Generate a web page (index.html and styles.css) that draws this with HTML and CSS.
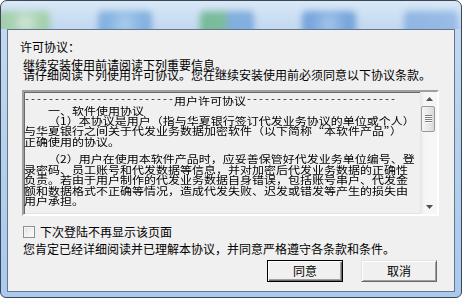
FILE: index.html
```html
<!DOCTYPE html>
<html lang="zh-CN">
<head>
<meta charset="utf-8">
<link rel="stylesheet" href="styles.css">
</head>
<body>
<div class="window">
  <div class="titlebar">
    <span class="blob b1"></span>
    <span class="blob b2"></span>
    <span class="blob b3"></span>
    <span class="blob b4"></span>
    <span class="blob b5"></span>
  </div>
  <div class="client">
    <div class="title">许可协议：</div>
    <div class="intro">继续安装使用前请阅读下列重要信息。<br>请仔细阅读下列使用许可协议。您在继续安装使用前必须同意以下协议条款。</div>
    <div class="license">
      <div class="license-view">
        <div class="license-text">
          <p class="para"><span class="dash">-------------------------</span>用户许可协议<span class="dash">-------------------------</span><br><span class="ind"></span>一、软件使用协议<br><span class="ind"></span>（1）本协议是用户（指与华夏银行签订代发业务协议的单位或个人）<br>与华夏银行之间关于代发业务数据加密软件（以下简称“本软件产品”）<br>正确使用的协议。</p>
          <p class="para second"><span class="ind"></span>（2）用户在使用本软件产品时，应妥善保管好代发业务单位编号、登<br>录密码、员工账号和代发数据等信息，并对加密后代发业务数据的正确性<br>负责。若由于用户制作的代发业务数据自身错误，包括账号串户、代发金<br>额和数据格式不正确等情况，造成代发失败、迟发或错发等产生的损失由<br>用户承担。</p>
        </div>
      </div>
      <div class="scrollbar">
        <div class="sb-btn up"><svg width="7" height="4" viewBox="0 0 7 4"><polygon points="3.5,0 7,4 0,4" fill="#505050"/></svg></div>
        <div class="sb-track">
          <div class="thumb"><span></span><span></span><span></span><span></span></div>
        </div>
        <div class="sb-btn down"><svg width="7" height="4" viewBox="0 0 7 4"><polygon points="0,0 7,0 3.5,4" fill="#505050"/></svg></div>
      </div>
    </div>
    <label class="check-row"><span class="checkbox"></span><span>下次登陆不再显示该页面</span></label>
    <div class="statement">您肯定已经详细阅读并已理解本协议，并同意严格遵守各条款和条件。</div>
    <div class="buttons">
      <button class="btn default">同意</button>
      <button class="btn">取消</button>
    </div>
  </div>
</div>
</body>
</html>
```
FILE: styles.css
```css
html, body {
  margin: 0;
  padding: 0;
  background: #ffffff;
}
body {
  width: 463px;
  height: 299px;
  overflow: hidden;
  font-family: "Noto Sans CJK SC", "Noto Sans", sans-serif;
  font-size: 12px;
  color: #000;
}
.window {
  box-sizing: border-box;
  width: 462px;
  height: 298px;
  border: 1px solid #3d4754;
  border-radius: 7px 7px 6px 6px;
  background: linear-gradient(180deg, #d8e8f7 0, #c2d8f0 28px, #b2cfee 60%, #a9caee 100%);
  padding: 0 6px 5px 6px;
  display: flex;
  flex-direction: column;
  overflow: hidden;
}
.titlebar {
  height: 28px;
  margin: 0 -6px;
  display: flex;
  gap: 48px;
  padding-top: 10px;
  box-sizing: border-box;
  overflow: hidden;
}
.blob {
  flex: none;
  width: 54px;
  height: 30px;
  border-radius: 5px;
  filter: blur(3px);
  opacity: 0.75;
}
.b1 { margin-left: -5px; background: radial-gradient(circle at 55% 40%, #d9ecd8 0, #9fcf9c 40%, #8dc48d 100%); }
.b2 { background: radial-gradient(circle at 50% 45%, #a5c9ea 0, #6fa6dc 55%, #6a9fd8 100%); }
.b3 { background: linear-gradient(90deg, #5fb07e 0, #64b184 45%, #6aa1da 55%, #6b9fd9 100%); }
.b4 { background: radial-gradient(circle at 50% 45%, #9cc0e8 0, #5f95d6 55%, #5b90d3 100%); }
.b5 { background: linear-gradient(90deg, #7ea8df, #8bb1e3); }

.client {
  box-sizing: border-box;
  height: 263px;
  border: 1px solid #66768a;
  background: #f0f0f0;
  display: flex;
  flex-direction: column;
}
.title {
  margin: 11px 0 0 12px;
  line-height: 12px;
}
.intro {
  margin: 7px 0 0 15px;
  line-height: 10.4px;
  white-space: nowrap;
}
.license {
  margin: 9px 15px 0 14px;
  height: 126px;
  box-sizing: border-box;
  border: 2px solid;
  border-color: #a0a0a0 #ffffff #ffffff #a0a0a0;
  box-shadow: inset 1px 1px 0 #696969, inset -1px -1px 0 #e3e3e3;
  background: #f0f0f0;
  display: flex;
}
.license-view {
  flex: 1;
  overflow: hidden;
}
.license-text {
  padding-top: 3.5px;
  white-space: nowrap;
  line-height: 12.24px;
  transform: scaleY(0.85);
  transform-origin: 0 0;
}
.para {
  margin: 0;
}
.para.second {
  margin-top: 8.2px;
}
.ind {
  display: inline-block;
  width: 24px;
}
.dash {
  font-family: "Liberation Mono", monospace;
  font-size: 10px;
  line-height: 0;
  vertical-align: 3.5px;
}
.scrollbar {
  width: 17px;
  flex: none;
  display: flex;
  flex-direction: column;
  background: linear-gradient(90deg, #e9e9e9 0, #f5f5f5 3px, #f7f7f7 100%);
  border-left: 1px solid #e6e6e6;
  box-sizing: border-box;
}
.sb-btn {
  height: 14px;
  display: flex;
  align-items: center;
  justify-content: center;
}
.sb-track {
  flex: 1;
}
.thumb {
  width: 14px;
  height: 26px;
  box-sizing: border-box;
  border: 1px solid #9a9a9a;
  border-radius: 2px;
  background: linear-gradient(90deg, #f6f6f6, #e6e6e6 60%, #d8d8d8);
  display: flex;
  flex-direction: column;
  align-items: center;
  justify-content: center;
  gap: 1px;
}
.thumb span {
  width: 7px;
  height: 1px;
  background: #7c7c7c;
  box-shadow: 0 1px 0 #fdfdfd;
}

.check-row {
  margin: 10px 0 0 15px;
  display: flex;
  align-items: center;
  gap: 5px;
  line-height: 12px;
  height: 12px;
}
.checkbox {
  width: 12px;
  height: 12px;
  box-sizing: border-box;
  border: 1px solid #8e8f8f;
  background: linear-gradient(135deg, #dcdcdc 0, #eeeeee 45%, #fcfcfc 100%);
  box-shadow: inset 0 0 0 1px #f6f6f6;
}
.statement {
  margin: 5px 0 0 15px;
  line-height: 12px;
  white-space: nowrap;
}
.buttons {
  margin-top: 5px;
  padding-right: 17px;
  display: flex;
  justify-content: flex-end;
  gap: 18px;
}
.btn {
  width: 76px;
  height: 22px;
  box-sizing: border-box;
  padding: 0;
  margin: 0;
  font: inherit;
  line-height: 12px;
  color: #000;
  background: #f0f0f0;
  border: 1px solid;
  border-color: #e3e3e3 #696969 #696969 #e3e3e3;
  box-shadow: inset 1px 1px 0 #ffffff, inset -1px -1px 0 #a0a0a0;
}
.btn.default {
  border-color: #000;
  box-shadow: inset 1px 1px 0 #ffffff, inset -1px -1px 0 #696969, inset -2px -2px 0 #a0a0a0;
}
```
